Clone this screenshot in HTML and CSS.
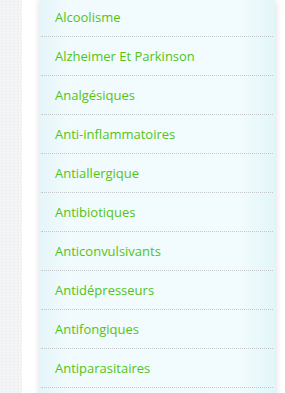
FILE: index.html
```html
<!DOCTYPE html>
<html lang="fr">

<head>
    <meta charset="UTF-8">
    <meta name="viewport" content="width=device-width, initial-scale=1.0">
    <title>Catégories</title>
    <link rel="stylesheet" href="styles.css">
</head>

<body>
    <div id="page">
        <div id="side-strip"></div>
        <div id="content">
            <ul class="cat-list">
                <li><a href="#">Alcoolisme</a></li>
                <li><a href="#">Alzheimer Et Parkinson</a></li>
                <li><a href="#">Analgésiques</a></li>
                <li><a href="#">Anti-inflammatoires</a></li>
                <li><a href="#">Antiallergique</a></li>
                <li><a href="#">Antibiotiques</a></li>
                <li><a href="#">Anticonvulsivants</a></li>
                <li><a href="#">Antidépresseurs</a></li>
                <li><a href="#">Antifongiques</a></li>
                <li><a href="#">Antiparasitaires</a></li>
                <li class="empty"></li>
            </ul>
        </div>
    </div>
</body>

</html>
```

FILE: styles.css
```css
body {
    margin: 0;
    background-color: #ffffff;
    font-family: "Open Sans", "DejaVu Sans", sans-serif;
    overflow: hidden;
}

#page {
    display: flex;
    height: 393px;
}

#side-strip {
    width: 22px;
    flex-shrink: 0;
    background-color: #f3f4f5;
    background-image: radial-gradient(#ecedee 1px, transparent 1px);
    background-size: 4px 3px;
}

#content {
    flex: 1;
    padding: 0 10px 0 17px;
}

.cat-list {
    list-style: none;
    margin: -2px 0 0 0;
    padding: 0;
    width: 236px;
    border-top-right-radius: 8px;
    border-top-left-radius: 6px;
    background: linear-gradient(to right, #e4f5fa 0%, #f1fafc 12%, #f2fbfd 85%, #e2f6fa 100%);
    box-shadow: -2px 0 4px rgba(0, 0, 0, 0.07), 3px 0 5px rgba(0, 0, 0, 0.08);
}

.cat-list li {
    height: 38px;
    border-bottom: 1px dotted #c4c8ca;
    margin: 0 2px;
    display: flex;
    align-items: center;
}

.cat-list a {
    color: #52c414;
    text-decoration: none;
    font-size: 13px;
    padding-left: 14px;
}
```
